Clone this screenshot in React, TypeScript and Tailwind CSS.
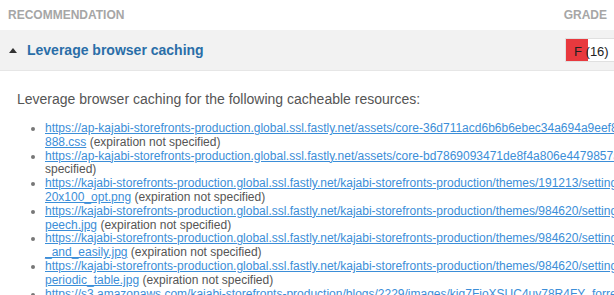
import React from "react";

type Item = { l1: string; l2: string; tail?: string };

const items: Item[] = [
  {
    l1: "https://ap-kajabi-storefronts-production.global.ssl.fastly.net/assets/core-36d711acd6b6b6ebec34a694a9eef86d2c9d1",
    l2: "888.css",
  },
  {
    l1: "https://ap-kajabi-storefronts-production.global.ssl.fastly.net/assets/core-bd7869093471de8f4a806e4479857a1f.css",
    l2: "",
    tail: "specified)",
  },
  {
    l1: "https://kajabi-storefronts-production.global.ssl.fastly.net/kajabi-storefronts-production/themes/191213/settings_images/bH",
    l2: "20x100_opt.png",
  },
  {
    l1: "https://kajabi-storefronts-production.global.ssl.fastly.net/kajabi-storefronts-production/themes/984620/settings_images/sp",
    l2: "peech.jpg",
  },
  {
    l1: "https://kajabi-storefronts-production.global.ssl.fastly.net/kajabi-storefronts-production/themes/984620/settings_images/learn",
    l2: "_and_easily.jpg",
  },
  {
    l1: "https://kajabi-storefronts-production.global.ssl.fastly.net/kajabi-storefronts-production/themes/984620/settings_images/the",
    l2: "periodic_table.jpg",
  },
  {
    l1: "https://s3.amazonaws.com/kajabi-storefronts-production/blogs/2229/images/kiq7FioXSUC4uy78R4FY_forrest.jpg",
    l2: "",
    tail: "(expiration not specified)",
  },
];

export default function App() {
  return (
    <div
      className="w-[614px] h-[295px] overflow-hidden bg-white"
      style={{ fontFamily: '"Liberation Sans", Arial, sans-serif' }}
    >
      <div className="flex items-center justify-between h-[30px] pl-[8px] pr-[7px] text-[12px] font-bold text-[#a6a6a6]">
        <span>RECOMMENDATION</span>
        <span>GRADE</span>
      </div>
      <div className="flex items-center h-[41px] bg-[#f2f2f2] border-b border-[#e6e6e6]">
        <span className="ml-[9px] mr-[10px] w-0 h-0 border-l-[4px] border-r-[4px] border-b-[5px] border-l-transparent border-r-transparent border-b-[#333]" />
        <span className="text-[14px] font-bold text-[#2a6ea8]">Leverage browser caching</span>
        <div className="ml-auto mr-[-100px] w-[149px] h-[24px] bg-white border border-[#e0e0e0] relative flex">
          <div className="w-[22px] h-full bg-[#e8393e]" />
          <span className="absolute left-[8px] top-[3px] text-[13px] text-[#222]">F (16)</span>
        </div>
      </div>
      <div className="w-[900px] pl-[17px] pt-[20px] text-[#555]">
        <p className="text-[14px] leading-[16px]">
          Leverage browser caching for the following cacheable resources:
        </p>
        <ul className="mt-[15px] pl-[28px] list-disc text-[12px] leading-[13.8px] whitespace-nowrap marker:text-[#777]">
          {items.map((it, i) => (
            <li key={i}>
              <a href="#" className="text-[#3b8ed8] underline">
                {it.l1}
                {it.l2 && <br />}
                {it.l2}
              </a>{" "}
              {it.tail ? (
                <>
                  {it.tail === "specified)" ? "(expiration not" : it.tail}
                  {it.tail === "specified)" && (
                    <>
                      <br />
                      specified)
                    </>
                  )}
                </>
              ) : (
                "(expiration not specified)"
              )}
            </li>
          ))}
        </ul>
      </div>
    </div>
  );
}
